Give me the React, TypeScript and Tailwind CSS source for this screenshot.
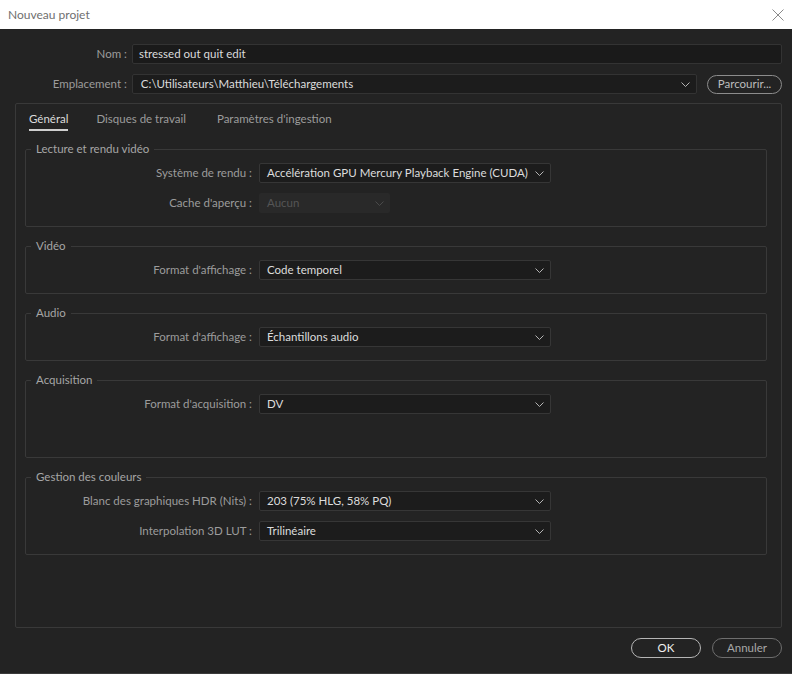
import React from 'react';

const FONT = { fontFamily: 'Lato, "Noto Sans", sans-serif' };

function Chevron({ className = 'text-[#b4b4b4]' }: { className?: string }) {
  return (
    <svg width="9" height="5" viewBox="0 0 9 5" className={`shrink-0 ${className}`}>
      <path d="M0.5 0.5 L4.5 4.5 L8.5 0.5" fill="none" stroke="currentColor" strokeWidth="1" />
    </svg>
  );
}

function Select({ value, width = 'w-[292px]', disabled = false }: { value: string; width?: string; disabled?: boolean }) {
  if (disabled) {
    return (
      <div className={`${width} h-[20px] flex items-center justify-between pl-[8px] pr-[6px] bg-[#292929] rounded-[2px] text-[#555555]`}>
        <span className="whitespace-nowrap">{value}</span>
        <Chevron className="text-[#4a4a4a]" />
      </div>
    );
  }
  return (
    <div className={`${width} h-[20px] flex items-center justify-between pl-[7px] pr-[6px] bg-[#1c1c1c] border border-[#363636] rounded-[2px] text-[#dcdcdc]`}>
      <span className="whitespace-nowrap">{value}</span>
      <Chevron />
    </div>
  );
}

function Row({ label, children }: { label: string; children: React.ReactNode }) {
  return (
    <div className="flex items-center">
      <div className="w-[233px] text-right text-[#9c9c9c] pr-[7px] whitespace-nowrap">{label}</div>
      {children}
    </div>
  );
}

function Group({ title, children, pb = 'pb-[13px]' }: { title: string; children: React.ReactNode; pb?: string }) {
  return (
    <fieldset className={`border border-[#393939] rounded-[2px] px-0 pt-[6px] ${pb} m-0`}>
      <legend className="ml-[5px] px-[5px] leading-[16px] text-[#a6a6a6]">{title}</legend>
      <div className="flex flex-col gap-[10px]">{children}</div>
    </fieldset>
  );
}

export default function App() {
  return (
    <div className="w-[792px] h-[674px] flex flex-col bg-[#232323] text-[11.5px] border-b border-[#3a3a3a]" style={FONT}>
      {/* Title bar */}
      <div className="h-[29px] bg-white flex items-center justify-between pl-[8px] pr-[8px] shrink-0">
        <span className="text-[#6f6f6f] text-[12px]">Nouveau projet</span>
        <svg width="12" height="12" viewBox="0 0 12 12" className="text-[#8a8a8a]">
          <path d="M0.5 0.5 L11.5 11.5 M11.5 0.5 L0.5 11.5" stroke="currentColor" strokeWidth="1" />
        </svg>
      </div>

      {/* Top fields */}
      <div className="flex flex-col gap-[10px] pt-[15px] pl-[15px] pr-[10px]">
        <div className="flex items-center">
          <div className="w-[117px] text-right text-[#9c9c9c] pr-[5px]">Nom :</div>
          <div className="flex-1 h-[20px] flex items-center pl-[6px] bg-[#1a1a1a] border border-[#333333] rounded-[2px] text-[#dcdcdc]">
            stressed out quit edit
          </div>
        </div>
        <div className="flex items-center">
          <div className="w-[117px] text-right text-[#9c9c9c] pr-[5px]">Emplacement :</div>
          <div className="w-[566px] h-[20px] flex items-center justify-between pl-[8px] pr-[6px] bg-[#1c1c1c] border border-[#333333] rounded-[2px] text-[#dcdcdc]">
            <span>C:\Utilisateurs\Matthieu\Téléchargements</span>
            <Chevron />
          </div>
          <button className="ml-[10px] w-[75px] h-[19px] rounded-full border border-[#8c8c8c] text-[#bdbdbd] leading-none flex items-center justify-center">
            Parcourir...
          </button>
        </div>
      </div>

      {/* Main panel */}
      <div className="flex-1 mt-[9px] ml-[15px] mr-[10px] border border-[#393939] rounded-[2px] pl-[9px] pr-[14px] flex flex-col">
        <div className="flex items-end gap-[28px] pt-[7px] pl-[4px]">
          <div className="flex flex-col">
            <span className="leading-[16px] pb-[2px] text-[#dcdcdc]">Général</span>
            <span className="h-[2px] bg-[#cfcfcf]" />
          </div>
          <div className="flex flex-col">
            <span className="leading-[16px] pb-[2px] text-[#9c9c9c]">Disques de travail</span>
            <span className="h-[2px]" />
          </div>
          <div className="flex flex-col ml-[3px]">
            <span className="leading-[16px] pb-[2px] text-[#9c9c9c]">Paramètres d'ingestion</span>
            <span className="h-[2px]" />
          </div>
        </div>

        <div className="flex flex-col gap-[11px] mt-[10px]">
          <Group title="Lecture et rendu vidéo">
            <Row label="Système de rendu :">
              <Select value="Accélération GPU Mercury Playback Engine (CUDA)" />
            </Row>
            <Row label="Cache d'aperçu :">
              <Select value="Aucun" width="w-[131px]" disabled />
            </Row>
          </Group>
          <Group title="Vidéo">
            <Row label="Format d'affichage :">
              <Select value="Code temporel" />
            </Row>
          </Group>
          <Group title="Audio">
            <Row label="Format d'affichage :">
              <Select value="Échantillons audio" />
            </Row>
          </Group>
          <Group title="Acquisition" pb="pb-[43px]">
            <Row label="Format d'acquisition :">
              <Select value="DV" />
            </Row>
          </Group>
          <Group title="Gestion des couleurs">
            <Row label="Blanc des graphiques HDR (Nits) :">
              <Select value="203 (75% HLG, 58% PQ)" />
            </Row>
            <Row label="Interpolation 3D LUT :">
              <Select value="Trilinéaire" />
            </Row>
          </Group>
        </div>
      </div>

      {/* Buttons */}
      <div className="shrink-0 flex justify-end gap-[11px] pt-[10px] pb-[15px] pr-[10px]">
        <button className="w-[70px] h-[20px] rounded-full border border-[#b5b5b5] text-[#f0f0f0] leading-none flex items-center justify-center">
          OK
        </button>
        <button className="w-[70px] h-[20px] rounded-full border border-[#6e6e6e] text-[#a8a8a8] leading-none flex items-center justify-center">
          Annuler
        </button>
      </div>
    </div>
  );
}
